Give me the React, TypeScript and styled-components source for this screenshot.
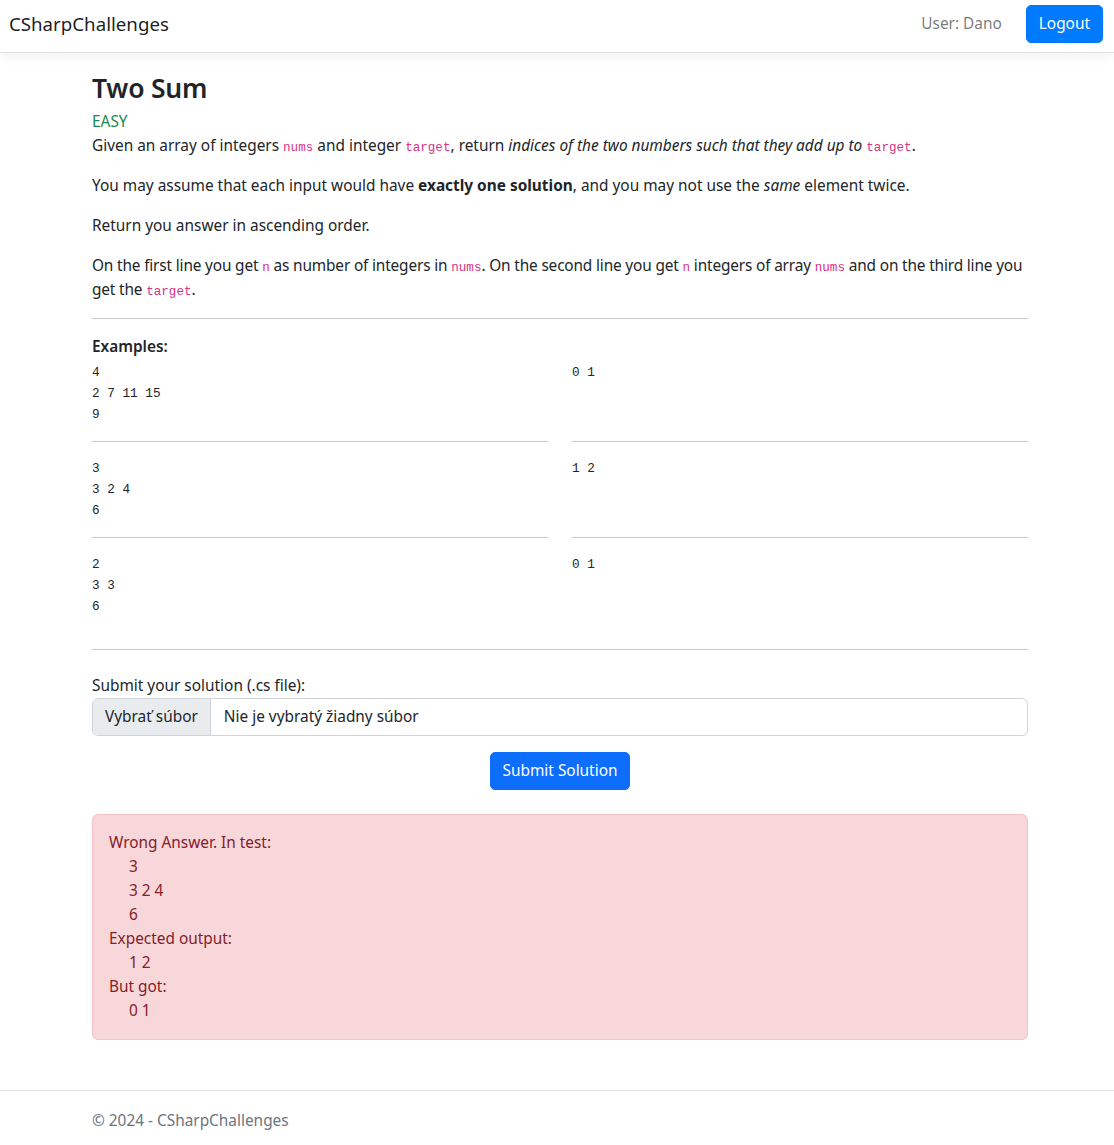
import React from 'react';
import styled, { createGlobalStyle } from 'styled-components';

const GlobalStyle = createGlobalStyle`
  * { box-sizing: border-box; }
  body {
    margin: 0;
    background: #fff;
    color: #212529;
    font-family: "Noto Sans", "Open Sans", Arial, sans-serif;
    font-size: 15.4px;
    line-height: 24px;
  }
`;

const examples = [
  { input: ['4', '2 7 11 15', '9'], output: ['0 1'] },
  { input: ['3', '3 2 4', '6'], output: ['1 2'] },
  { input: ['2', '3 3', '6'], output: ['0 1'] },
];

const App = () => {
  return (
    <>
      <GlobalStyle />
      <NavBar>
        <Brand href="#">CSharpChallenges</Brand>
        <NavRight>
          <UserName>User: Dano</UserName>
          <Button $variant="logout">Logout</Button>
        </NavRight>
      </NavBar>

      <Container>
        <Title>Two Sum</Title>
        <Difficulty>EASY</Difficulty>
        <Para>
          Given an array of integers <Code>nums</Code> and integer <Code>target</Code>, return{' '}
          <em>indices of the two numbers such that they add up to</em> <Code>target</Code>.
        </Para>
        <Para>
          You may assume that each input would have <strong>exactly one solution</strong>, and you
          may not use the <em>same</em> element twice.
        </Para>
        <Para>Return you answer in ascending order.</Para>
        <Para $tight>
          On the first line you get <Code>n</Code> as number of integers in <Code>nums</Code>. On the
          second line you get <Code>n</Code> integers of array <Code>nums</Code> and on the third
          line you get the <Code>target</Code>.
        </Para>
        <Rule />

        <ExamplesLabel>Examples:</ExamplesLabel>
        {examples.map((ex, i) => (
          <ExampleRow key={i}>
            <ExampleCol>
              <Pre>{ex.input.join('\n')}</Pre>
              {i < examples.length - 1 && <Rule />}
            </ExampleCol>
            <ExampleCol>
              <Pre>{ex.output.join('\n')}</Pre>
              {i < examples.length - 1 && <Rule />}
            </ExampleCol>
          </ExampleRow>
        ))}
        <Rule />

        <UploadForm>
          <FieldLabel>Submit your solution (.cs file):</FieldLabel>
          <FileInput>
            <FileButton>Vybrať súbor</FileButton>
            <FileName>Nie je vybratý žiadny súbor</FileName>
          </FileInput>
          <SubmitRow>
            <Button $variant="primary">Submit Solution</Button>
          </SubmitRow>
        </UploadForm>

        <Alert>
          <div>Wrong Answer. In test:</div>
          <Indent>3</Indent>
          <Indent>3 2 4</Indent>
          <Indent>6</Indent>
          <div>Expected output:</div>
          <Indent>1 2</Indent>
          <div>But got:</div>
          <Indent>0 1</Indent>
        </Alert>
      </Container>

      <Footer>
        <FooterInner>© 2024 - CSharpChallenges</FooterInner>
      </Footer>
    </>
  );
};

const NavBar = styled.nav`
  height: 53px;
  display: flex;
  align-items: center;
  justify-content: space-between;
  padding: 0 11px 4px 9px;
  background: #fff;
  border-bottom: 1px solid #dee2e6;
  box-shadow: 0 4px 12px rgb(0 0 0 / 0.05);
`;

const Brand = styled.a`
  font-size: 18.7px;
  color: rgba(0, 0, 0, 0.9);
  text-decoration: none;
`;

const NavRight = styled.div`
  display: flex;
  align-items: center;
  gap: 24px;
`;

const UserName = styled.span`
  color: rgba(0, 0, 0, 0.55);
`;

const Button = styled.button<{ $variant: 'logout' | 'primary' }>`
  font-family: inherit;
  font-size: 15.4px;
  line-height: 24px;
  color: #fff;
  border: 1px solid ${(p) => (p.$variant === 'logout' ? '#007bff' : '#0d6efd')};
  background: ${(p) => (p.$variant === 'logout' ? '#007bff' : '#0d6efd')};
  border-radius: 5px;
  padding: 6px 12px;
  cursor: pointer;
`;

const Container = styled.main`
  width: 936px;
  margin: 0 auto;
  padding: 16px 0 0;
  position: relative;
  left: 3px;
`;

const Title = styled.h2`
  margin: 0 0 3px;
  font-size: 26.5px;
  line-height: 38px;
  font-weight: 600;
  letter-spacing: -0.2px;
`;

const Difficulty = styled.div`
  color: #198754;
`;

const Para = styled.p<{ $tight?: boolean }>`
  margin: 0 0 16px;
  letter-spacing: ${(p) => (p.$tight ? '-0.16px' : 'normal')};
`;

const Code = styled.code`
  font-family: "Liberation Mono", "DejaVu Sans Mono", monospace;
  font-size: 12.6px;
  line-height: 1;
  letter-spacing: normal;
  color: #d63384;
`;

const Rule = styled.hr`
  margin: 16px 0;
  border: 0;
  border-top: 1px solid #c8c9ca;
`;

const ExamplesLabel = styled.div`
  font-weight: 600;
  margin-bottom: 3px;
`;

const ExampleRow = styled.div`
  display: grid;
  grid-template-columns: 1fr 1fr;
  column-gap: 24px;
`;

const ExampleCol = styled.div`
  display: block;
`;

const Pre = styled.pre`
  margin: 0 0 16px;
  min-height: 63px;
  font-family: "Liberation Mono", "DejaVu Sans Mono", monospace;
  font-size: 12.7px;
  line-height: 21px;
  color: #212529;
`;

const UploadForm = styled.form`
  margin-top: 24px;
  display: flex;
  flex-direction: column;
`;

const FieldLabel = styled.label`
  display: block;
`;

const FileInput = styled.div`
  display: flex;
  height: 38px;
  border: 1px solid #ced4da;
  border-radius: 6px;
  overflow: hidden;
`;

const FileButton = styled.span`
  display: flex;
  align-items: center;
  padding: 0 12px;
  background: #e9ecef;
  border-right: 1px solid #ced4da;
`;

const FileName = styled.span`
  display: flex;
  align-items: center;
  padding: 0 13px;
`;

const SubmitRow = styled.div`
  display: flex;
  justify-content: center;
  margin-top: 16px;
`;

const Alert = styled.div`
  margin-top: 24px;
  padding: 16px;
  background: #f8d7da;
  border: 1px solid #f5c2c7;
  border-radius: 6px;
  color: #842029;
`;

const Indent = styled.div`
  padding-left: 20px;
`;

const Footer = styled.footer`
  margin-top: 50px;
  border-top: 1px solid #dee2e6;
  line-height: 60px;
  color: #6c757d;
`;

const FooterInner = styled.div`
  width: 936px;
  margin: 0 auto;
  position: relative;
  left: 3px;
`;

export default App;
